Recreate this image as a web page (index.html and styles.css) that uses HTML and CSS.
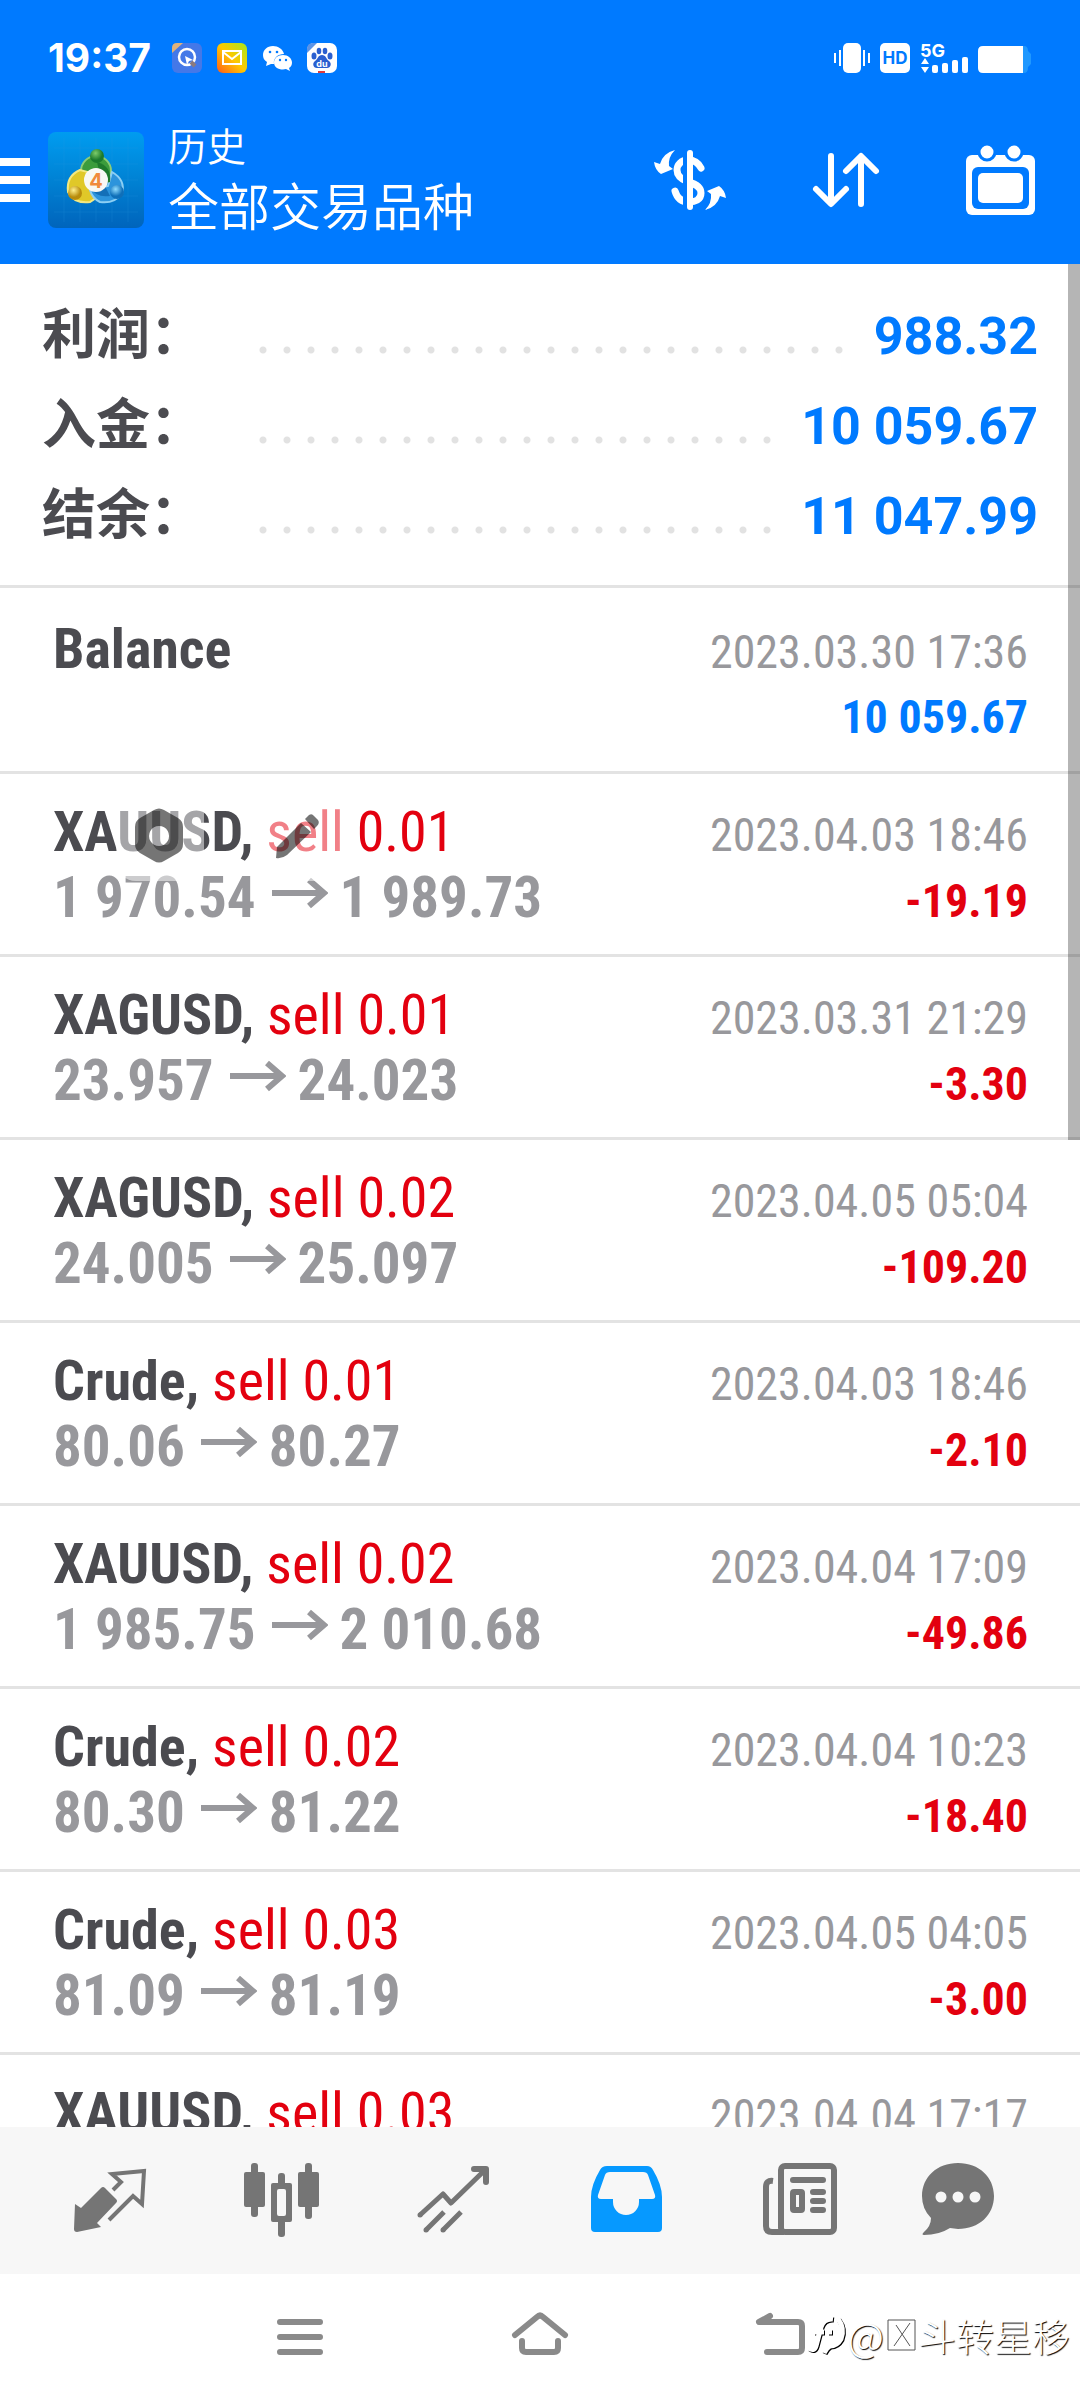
FILE: index.html
```
<!DOCTYPE html>
<html lang="zh-CN">
<head>
    <meta charset="UTF-8">
    <meta name="viewport" content="width=device-width, initial-scale=1">
    <title>历史</title>
    <link rel="stylesheet" href="styles.css">
</head>
<body>
    <header class="header">
        <div class="status">
            <span class="clock">19:37</span>
            <div class="status-apps">
                <svg width="30" height="30" viewBox="0 0 30 30">
                    <rect width="30" height="30" rx="6" fill="#4478e8"/>
                    <path d="M0 10V5Q0 0 5 0H11Z" fill="#e0b27a"/>
                    <circle cx="15" cy="14" r="8" fill="none" stroke="#fff" stroke-width="2.500"/>
                    <path d="M13 13l8 4-4 1-2 4z" fill="#fff"/>
                    <path d="M19 19l4 4" stroke="#8b7a80" stroke-width="4"/>
                </svg>
                <svg width="30" height="30" viewBox="0 0 30 30">
                    <defs>
                        <linearGradient id="mail" x1="0" y1="1" x2="1" y2="0">
                            <stop offset="0" stop-color="#ff5a1a"/>
                            <stop offset="0.5" stop-color="#ffc800"/>
                            <stop offset="1" stop-color="#a4e81c"/>
                        </linearGradient>
                    </defs>
                    <rect width="30" height="30" rx="6" fill="url(#mail)"/>
                    <path d="M6 8H24V21H6ZM6 9l9 7 9-7" fill="none" stroke="#fff" stroke-width="2"/>
                </svg>
                <svg width="30" height="30" viewBox="0 0 30 30" fill="#fff">
                    <path d="M11 3C5 3 1 7 1 12c0 3 1 5 4 7l-1 4 5-2h3c-1-6 4-10 10-10C21 6 16 3 11 3z"/>
                    <path d="M21 12c-5 0-9 3-9 7.500s4 7 9 7l3-.5 4 2-1-3c2-1 3-3 3-5.500 0-4-4-7.500-9-7.500z"/>
                    <g fill="#007aff"><circle cx="8" cy="9" r="1.300"/><circle cx="15" cy="9" r="1.300"/><circle cx="18" cy="17" r="1.200"/><circle cx="24" cy="17" r="1.200"/></g>
                </svg>
                <svg width="30" height="30" viewBox="0 0 30 30">
                    <rect width="30" height="30" rx="7" fill="#fff"/>
                    <path d="M0 10V6Q0 0 6 0H10Z" fill="#5b93e6"/>
                    <g fill="#2a5fd0">
                        <ellipse cx="7" cy="13" rx="2.500" ry="3.500"/><ellipse cx="12" cy="8" rx="2.300" ry="3.300"/><ellipse cx="18" cy="8" rx="2.300" ry="3.300"/><ellipse cx="23" cy="13" rx="2.500" ry="3.500"/>
                        <path d="M15 12c4 0 4 4 7 6s2 7-2 7H10c-4 0-5-5-2-7s3-6 7-6z"/>
                    </g>
                    <text x="15" y="24" class="du">du</text>
                    <path d="M11 29H18" stroke="#e23b3b" stroke-width="2"/>
                </svg>
            </div>
            <div class="status-system">
                <svg width="36" height="30" viewBox="0 0 36 30" fill="#fff">
                    <rect x="9" width="18" height="30" rx="5"/>
                    <path d="M1 10V20M6 7V23M30 7V23M35 10V20" stroke="#fff" stroke-width="2"/>
                </svg>
                <svg width="30" height="30" viewBox="0 0 30 30">
                    <rect width="30" height="30" rx="5" fill="#fff"/>
                    <text x="15" y="21" class="hd">HD</text>
                </svg>
                <svg width="48" height="30" viewBox="0 0 48 30" fill="#fff">
                    <text x="0" y="14" class="fiveg">5G</text>
                    <path d="M5 15l4 6H1zM5 30l-4-6h8z"/>
                    <rect x="12" y="22" width="6" height="8" rx="2"/>
                    <rect x="22" y="20" width="6" height="10" rx="2"/>
                    <rect x="32" y="17" width="6" height="13" rx="2"/>
                    <rect x="42" y="14" width="6" height="16" rx="2"/>
                </svg>
                <svg width="54" height="30" viewBox="0 0 54 30">
                    <path d="M44 3h2q4 0 4 5l3 3v10l-3 3q0 6-4 6h-2z" fill="#1f98ff"/>
                    <path d="M5 3H45V30H5Q0 30 0 25V8Q0 3 5 3z" fill="#fff"/>
                </svg>
            </div>
        </div>

        <div class="toolbar">
            <button class="menu" aria-label="菜单">
                <svg width="30" height="44" viewBox="0 0 30 44" fill="#fff">
                    <path d="M0 0H30V8H0zM0 18H30V26H0zM0 36H30V44H0z"/>
                </svg>
            </button>
            <svg class="logo" width="96" height="96" viewBox="0 0 96 96">
                <defs>
                    <linearGradient id="sky" x1="0" y1="0" x2="0" y2="1">
                        <stop offset="0" stop-color="#009cf0"/>
                        <stop offset="0.5" stop-color="#0082d4"/>
                        <stop offset="1" stop-color="#0064bc"/>
                    </linearGradient>
                    <radialGradient id="green" cx="0.4" cy="0.3"><stop offset="0" stop-color="#7ccc6a"/><stop offset="1" stop-color="#1c7a2c"/></radialGradient>
                    <radialGradient id="gold" cx="0.4" cy="0.3"><stop offset="0" stop-color="#fff08c"/><stop offset="1" stop-color="#b88c0c"/></radialGradient>
                    <radialGradient id="blue" cx="0.4" cy="0.3"><stop offset="0" stop-color="#8fdcff"/><stop offset="1" stop-color="#0f6fb8"/></radialGradient>
                </defs>
                <rect width="96" height="96" rx="8" fill="url(#sky)"/>
                <path d="M16 6V90M32 6V90M48 6V90M64 6V90M80 6V90M6 16H90M6 32H90M6 48H90M6 64H90M6 80H90" stroke="#2b9be0" stroke-opacity="0.2"/>
                <circle cx="48" cy="39" r="15" fill="#3c9c3c" stroke="#8ccc78" stroke-width="2"/>
                <path d="M32 38Q18 44 20 60Q26 72 42 70L54 62L40 40Z" fill="#e0c828" stroke="#f4e880" stroke-width="2"/>
                <path d="M64 40Q78 48 74 62Q66 72 52 70Q44 66 42 58L60 54Z" fill="#2c94dc" stroke="#8ccff4" stroke-width="2"/>
                <path d="M49 30Q64 34 62 50L54 52Z" fill="#1f7a2c"/>
                <path d="M43 56Q48 66 62 64L56 52Z" fill="#1470b8"/>
                <circle cx="49" cy="24" r="7" fill="url(#green)"/>
                <circle cx="27" cy="61" r="7" fill="url(#gold)"/>
                <circle cx="69" cy="60" r="7" fill="url(#blue)"/>
                <circle cx="48" cy="48" r="12" fill="#f8f8f4"/>
                <text x="48" y="56" class="logo-digit">4</text>
            </svg>
            <div class="titles">
                <div class="title-small">历史</div>
                <h1 class="title-large">全部交易品种</h1>
            </div>
            <div class="actions">
                <button aria-label="品种">
                    <svg width="72" height="60" viewBox="0 0 72 60">
                        <path d="M47 18C44 12 39 10 34 10C27 10 23 15 23 20C23 27 29 30 34 32C42 34 47 37 47 43C47 50 41 52 35 52C28 52 23 48 21 41" fill="none" stroke="#fff" stroke-width="7" stroke-linecap="round"/>
                        <path d="M31 0V60" stroke="#007aff" stroke-width="4"/>
                        <path d="M36 3V57" stroke="#fff" stroke-width="6" stroke-linecap="round"/>
                        <path id="swap" d="M21 0Q9 3 6 14L0 12Q1 20 7 24L19 19L15 16Q14 7 21 0Z" fill="#fff"/>
                        <use href="#swap" transform="rotate(180 36 30)"/>
                    </svg>
                </button>
                <button aria-label="排序">
                    <svg width="66" height="54" viewBox="0 0 66 54" fill="none" stroke="#fff" stroke-width="6" stroke-linecap="round" stroke-linejoin="round">
                        <path d="M18 3V50M3 36L18 51L33 36M48 51V4M33 18L48 3L63 18"/>
                    </svg>
                </button>
                <button aria-label="日期">
                    <svg width="69" height="69" viewBox="0 0 69 69">
                        <rect y="9" width="69" height="60" rx="6" fill="#fff"/>
                        <g fill="#fff" stroke="#007aff" stroke-width="3"><circle cx="21" cy="6" r="8"/><circle cx="48" cy="6" r="8"/></g>
                        <rect x="6" y="21" width="57" height="42" rx="6" fill="#007aff"/>
                        <rect x="12" y="27" width="45" height="30" rx="5" fill="#fff"/>
                    </svg>
                </button>
            </div>
        </div>
    </header>

    <main class="history">
        <dl class="summary">
            <div class="total"><dt>利润：</dt><dd>988.32</dd></div>
            <div class="total"><dt>入金：</dt><dd>10 059.67</dd></div>
            <div class="total"><dt>结余：</dt><dd>11 047.99</dd></div>
        </dl>

        <ul class="deals">
            <li class="deal">
                <div class="line"><b class="symbol">Balance</b><time>2023.03.30 17:36</time></div>
                <div class="line"><b class="amount plus">10 059.67</b></div>
            </li>
            <li class="deal">
                <div class="line"><span><b class="symbol">XAUUSD,</b> <span class="side">sell 0.01</span></span><time>2023.04.03 18:46</time></div>
                <div class="line"><b class="prices">1 970.54<svg class="arrow"><use href="#arrow"/></svg>1 989.73</b><b class="amount">-19.19</b></div>
                <div class="float-tools">
                    <svg width="88" height="88" viewBox="0 0 88 88">
                        <path fill-rule="evenodd" d="M38 17Q43 14 48 17L62 25Q67 28 67 34V51Q67 57 62 60L48 68Q43 71 38 68L24 60Q19 57 19 51V34Q19 28 24 25ZM43 33a10 10 0 1 0 0.100 0z"/>
                    </svg>
                    <svg width="88" height="88" viewBox="0 0 88 88">
                        <path d="M20 65L21 54L45 30L55 39L31 62Q26 66 20 65ZM49 26L53 22Q56 20 58 23L62 27Q64 30 61 33L58 36Z"/>
                    </svg>
                </div>
            </li>
            <li class="deal">
                <div class="line"><span><b class="symbol">XAGUSD,</b> <span class="side">sell 0.01</span></span><time>2023.03.31 21:29</time></div>
                <div class="line"><b class="prices">23.957<svg class="arrow"><use href="#arrow"/></svg>24.023</b><b class="amount">-3.30</b></div>
            </li>
            <li class="deal">
                <div class="line"><span><b class="symbol">XAGUSD,</b> <span class="side">sell 0.02</span></span><time>2023.04.05 05:04</time></div>
                <div class="line"><b class="prices">24.005<svg class="arrow"><use href="#arrow"/></svg>25.097</b><b class="amount">-109.20</b></div>
            </li>
            <li class="deal">
                <div class="line"><span><b class="symbol">Crude,</b> <span class="side">sell 0.01</span></span><time>2023.04.03 18:46</time></div>
                <div class="line"><b class="prices">80.06<svg class="arrow"><use href="#arrow"/></svg>80.27</b><b class="amount">-2.10</b></div>
            </li>
            <li class="deal">
                <div class="line"><span><b class="symbol">XAUUSD,</b> <span class="side">sell 0.02</span></span><time>2023.04.04 17:09</time></div>
                <div class="line"><b class="prices">1 985.75<svg class="arrow"><use href="#arrow"/></svg>2 010.68</b><b class="amount">-49.86</b></div>
            </li>
            <li class="deal">
                <div class="line"><span><b class="symbol">Crude,</b> <span class="side">sell 0.02</span></span><time>2023.04.04 10:23</time></div>
                <div class="line"><b class="prices">80.30<svg class="arrow"><use href="#arrow"/></svg>81.22</b><b class="amount">-18.40</b></div>
            </li>
            <li class="deal">
                <div class="line"><span><b class="symbol">Crude,</b> <span class="side">sell 0.03</span></span><time>2023.04.05 04:05</time></div>
                <div class="line"><b class="prices">81.09<svg class="arrow"><use href="#arrow"/></svg>81.19</b><b class="amount">-3.00</b></div>
            </li>
            <li class="deal">
                <div class="line"><span><b class="symbol">XAUUSD,</b> <span class="side">sell 0.03</span></span><time>2023.04.04 17:17</time></div>
            </li>
        </ul>
        <div class="scrollbar"></div>
    </main>

    <nav class="tabs">
        <button aria-label="行情">
            <svg width="78" height="78" viewBox="0 0 78 78">
                <path d="M38 59L62 35L71 43L73 10L41 13L50 21L42 29" fill="none" stroke="currentColor" stroke-width="4"/>
                <path d="M4 43L10 47L30 27Q32 25 34 27L45 38Q47 40 45 42L26 62L30 66L6 71Q3 71 3 68Z" fill="currentColor"/>
            </svg>
        </button>
        <button aria-label="图表">
            <svg width="78" height="78" viewBox="0 0 78 78" fill="currentColor">
                <rect x="1" y="11" width="21" height="35" rx="2"/><rect x="8" y="2" width="7" height="54" rx="3"/>
                <path fill-rule="evenodd" d="M30 22H47Q49 22 49 24V59Q49 61 47 61H30Q28 61 28 59V24Q28 22 30 22zM36 28Q34 28 34 30V53Q34 55 36 55H41Q43 55 43 53V30Q43 28 41 28z"/>
                <rect x="35" y="12" width="7" height="13" rx="3"/><rect x="35" y="58" width="7" height="18" rx="3"/>
                <rect x="55" y="11" width="21" height="35" rx="2"/><rect x="62" y="2" width="7" height="56" rx="3"/>
            </svg>
        </button>
        <button aria-label="交易">
            <svg width="78" height="78" viewBox="0 0 78 78" fill="none" stroke="currentColor" stroke-width="5" stroke-linejoin="round">
                <path d="M5 54L28 33L36 42L71 8M11 69L29 51M28 69L46 51"/>
                <path d="M59 8H71V21" stroke-width="6" stroke-linecap="round"/>
                <path d="M5 54h.1M11 69h.1M28 69h.1" stroke-linecap="round"/>
            </svg>
        </button>
        <button class="active" aria-label="历史">
            <svg width="78" height="78" viewBox="0 0 78 78" fill="currentColor">
                <path fill-rule="evenodd" d="M20 5H60Q64 5 66 9Q75 24 75 36V67Q75 71 71 71H8Q4 71 4 67V36Q4 24 13 9Q15 5 20 5zM23 11Q19 11 18 14L11 34Q10 38 14 38H26V41A13 13 0 0 0 52 41V38H65Q69 38 68 34L61 14Q60 11 56 11z"/>
            </svg>
        </button>
        <button aria-label="新闻">
            <svg width="78" height="78" viewBox="0 0 78 78" fill="none" stroke="currentColor" stroke-width="6">
                <rect x="22" y="5" width="53" height="66" rx="4"/>
                <path d="M14 20Q7 19 7 26V65Q7 71 13 71H25"/>
                <rect x="34" y="31" width="9" height="18" rx="1"/>
                <path d="M34 19H64M54 31H64M54 40H64M54 49H64" stroke-linecap="round"/>
            </svg>
        </button>
        <button aria-label="消息">
            <svg width="78" height="78" viewBox="0 0 78 78">
                <path d="M27 2C48 2 63 16 63 35S48 68 27 68L19 67Q8 74 -7 74Q-10 74 -7 71Q0 65 0 57Q-9 48 -9 35C-9 16 6 2 27 2z" fill="currentColor"/>
                <g fill="#f7f7f7"><circle cx="10" cy="36" r="5.500"/><circle cx="27" cy="36" r="5.500"/><circle cx="44" cy="36" r="5.500"/></g>
            </svg>
        </button>
    </nav>

    <footer class="system-nav">
        <button aria-label="最近任务">
            <svg width="60" height="48" viewBox="0 0 60 48"><path d="M10 9H50M10 24H50M10 39H50"/></svg>
        </button>
        <button aria-label="主屏幕">
            <svg width="60" height="48" viewBox="0 0 60 48"><path d="M5 22L27 4Q30 1 33 4L55 22M12 28V35Q12 39 16 39H44Q48 39 48 35V28"/></svg>
        </button>
        <button aria-label="返回">
            <svg width="60" height="48" viewBox="0 0 60 48"><path d="M20 3L9 9H48Q52 9 52 13V35Q52 39 48 39H17"/></svg>
        </button>
        <div class="watermark">
            <svg width="38" height="46" viewBox="0 0 38 46" fill="none" stroke-width="5">
                <path d="M25 7Q16 6 13 15L8 34Q6 40 1 36M6 20H16M20 20H24M30 7Q37 16 33 27Q29 34 22 34Q18 36 16 41"/>
            </svg>
            <span class="at">@</span>
            <svg class="tofu" width="30" height="32" viewBox="0 0 30 32" fill="none"><path d="M2 1H29V31H2ZM24 4L8 27M10 6L24 27"/></svg>
            <span>斗转星移</span>
        </div>
    </footer>

    <svg class="sprite" aria-hidden="true">
        <symbol id="arrow" viewBox="0 0 56 32">
            <path d="M0 16H52M37 3L52 16L37 29" fill="none" stroke="currentColor" stroke-width="6"/>
        </symbol>
    </svg>
</body>
</html>
```
FILE: styles.css
```
* {
    box-sizing: border-box;
}

body {
    margin: 0;
    height: 100vh;
    display: flex;
    flex-direction: column;
    background: #fff;
    color: #4b4b50;
    font-family: "Roboto Condensed", "Liberation Sans Narrow", Roboto, "Noto Sans CJK SC", sans-serif;
    overflow: hidden;
}

button {
    padding: 0;
    border: none;
    background: none;
    color: inherit;
    cursor: pointer;
}

svg {
    display: block;
    flex: none;
    overflow: visible;
}

.sprite {
    position: absolute;
    width: 0;
    height: 0;
}

/* Header */
.header {
    flex: none;
    background: #007aff;
    color: #fff;
}

.status {
    display: flex;
    align-items: center;
    height: 116px;
    padding: 0 48px;
}

.clock {
    width: 124px;
    font: bold 39px/40px Inter, sans-serif;
}

.status-apps {
    display: flex;
    gap: 15px;
}

.status-system {
    display: flex;
    gap: 10px;
    margin-left: auto;
}

.du,
.hd,
.logo-digit {
    text-anchor: middle;
    font-family: Inter, sans-serif;
    font-weight: bold;
}

.du {
    font-size: 9px;
    fill: #fff;
}

.hd {
    font-size: 17px;
    fill: #007aff;
}

.fiveg {
    font: bold 18px Inter, sans-serif;
}

.logo-digit {
    font-size: 20px;
    fill: #f08a3c;
}

.toolbar {
    display: flex;
    align-items: center;
    height: 148px;
    padding: 0 45px 20px 0;
}

.logo {
    margin: 0 24px 0 18px;
}

.titles {
    padding-bottom: 8px;
    font-family: "Noto Sans CJK SC", sans-serif;
    font-weight: 350;
}

.title-small {
    font-size: 39px;
    line-height: 56px;
}

.title-large {
    margin: 0;
    font-size: 51px;
    font-weight: 350;
    line-height: 64px;
}

.actions {
    display: flex;
    align-items: center;
    gap: 87px;
    margin-left: auto;
}

/* History */
.history {
    position: relative;
    flex: 1;
    min-height: 0;
    overflow: hidden;
}

.summary {
    margin: 0;
    padding: 22px 42px 29px;
    border-bottom: 3px solid #e3e3e3;
    font-weight: bold;
}

.total {
    display: flex;
    align-items: baseline;
    height: 90px;
    line-height: 90px;
}

.total dt {
    width: 209px;
    font-family: "Noto Sans CJK SC", sans-serif;
    font-size: 54px;
    font-weight: 600;
}

/* dotted leader between label and value */
.total::before {
    content: "";
    order: 1;
    flex: 1;
    height: 8px;
    margin-right: 18px;
    background: radial-gradient(circle, #e2e2e2 3px, transparent 4px) 0 0 / 24px 8px repeat-x;
}

.total dd {
    order: 2;
    margin: 0;
    color: #007aff;
    font-family: Roboto, sans-serif;
    font-size: 52px;
}

.deals {
    margin: 0;
    padding: 3px 0 0;
    list-style: none;
}

.deal {
    position: relative;
    padding: 26px 52px 24px 53px;
    border-bottom: 3px solid #e3e3e3;
}

.line {
    display: flex;
    align-items: baseline;
    height: 65px;
    font-size: 56px;
    line-height: 65px;
    white-space: nowrap;
}

.line::before {
    content: "\200b";
}

.side {
    color: #e3000f;
}

.prices {
    color: #98989c;
    font-size: 57px;
}

.arrow {
    display: inline-block;
    width: 56px;
    height: 32px;
    margin: 0 12px 0 16px;
    vertical-align: 8px;
}

time,
.amount {
    margin-left: auto;
    font-size: 46px;
}

time {
    color: #98989c;
}

.amount {
    color: #e3000f;
}

.plus {
    color: #007aff;
}

/* translucent buttons floating over the list */
.float-tools {
    position: absolute;
    left: 116px;
    top: 19px;
    display: flex;
    gap: 52px;
}

.float-tools svg {
    border-radius: 20px;
    background: rgba(255, 255, 255, 0.5);
    fill: rgba(0, 0, 0, 0.54);
}

.scrollbar {
    position: absolute;
    top: 0;
    right: 0;
    width: 12px;
    height: 876px;
    background: rgba(0, 0, 0, 0.29);
}

/* Bottom bars */
.tabs {
    flex: none;
    display: flex;
    height: 147px;
    padding: 0 24px 2px;
    background: #f7f7f7;
    color: #757575;
}

.tabs button,
.system-nav button {
    flex: 1;
    display: flex;
    align-items: center;
    justify-content: center;
}

.tabs .active {
    color: #0699ff;
}

.system-nav {
    position: relative;
    flex: none;
    display: flex;
    height: 126px;
    padding: 0 180px;
}

.system-nav button path {
    fill: none;
    stroke: #8a8a8a;
    stroke-width: 6;
    stroke-linecap: round;
    stroke-linejoin: round;
}

.watermark {
    position: absolute;
    right: 10px;
    bottom: 38px;
    display: flex;
    align-items: center;
    gap: 2px;
    color: #fff;
    font: 300 38px/54px "Noto Sans CJK SC", sans-serif;
    text-shadow: 1px 1px 1px #000;
}

.at {
    font-size: 40px;
}

.watermark svg {
    stroke: #fff;
    filter: drop-shadow(1px 1px 0 #000);
}

.watermark .tofu {
    stroke: #555;
    filter: none;
}
```
